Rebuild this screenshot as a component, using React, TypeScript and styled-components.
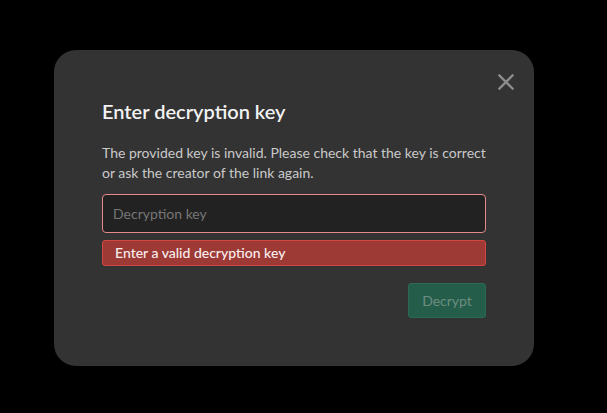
import styled, { createGlobalStyle } from "styled-components";

const GlobalStyle = createGlobalStyle`
    html, body {
        margin: 0;
        background: #000;
        font-family: Lato, "Noto Sans", sans-serif;
    }
`;

const CloseIcon = () => (
    <svg width="16" height="16" viewBox="0 0 16 16">
        <path d="M1.5 1.5 L14.5 14.5 M14.5 1.5 L1.5 14.5" stroke="#8c8c8c" strokeWidth="2.4" strokeLinecap="square" />
    </svg>
);

export default function App() {
    return (
        <>
            <GlobalStyle />
            <Backdrop>
                <Dialog>
                    <CloseButton aria-label="Close">
                        <CloseIcon />
                    </CloseButton>

                    <Title>Enter decryption key</Title>
                    <Description>
                        The provided key is invalid. Please check that the key is correct
                        or ask the creator of the link again.
                    </Description>

                    <KeyInput placeholder="Decryption key" />
                    <ErrorMessage>Enter a valid decryption key</ErrorMessage>

                    <Actions>
                        <DecryptButton disabled>Decrypt</DecryptButton>
                    </Actions>
                </Dialog>
            </Backdrop>
        </>
    );
}

const Backdrop = styled.div`
    width: 607px;
    height: 413px;
    box-sizing: border-box;
    padding: 50px 0 0 54px;
    background: #000;
`;

const Dialog = styled.div`
    position: relative;
    width: 480px;
    height: 316px;
    box-sizing: border-box;
    padding: 49px 48px 48px;
    background: #333333;
    border-radius: 22px;
    display: flex;
    flex-direction: column;
`;

const CloseButton = styled.button`
    position: absolute;
    top: 24px;
    right: 20px;
    width: 16px;
    height: 16px;
    padding: 0;
    border: none;
    background: none;
    display: flex;
    cursor: pointer;
`;

const Title = styled.h2`
    margin: 0;
    font-size: 20px;
    line-height: 24px;
    font-weight: 600;
    color: #f2f2f2;
`;

const Description = styled.p`
    margin: 20px 0 0;
    font-size: 14px;
    line-height: 20px;
    color: #c9c9c9;
`;

const KeyInput = styled.input`
    margin-top: 11px;
    height: 39px;
    box-sizing: border-box;
    padding: 0 10px;
    background: #222222;
    border: 1px solid #e58a8a;
    border-radius: 4px;
    font-family: inherit;
    font-size: 14px;
    color: #ddd;
    outline: none;

    &::placeholder {
        color: #767676;
    }
`;

const ErrorMessage = styled.div`
    margin-top: 7px;
    height: 26px;
    box-sizing: border-box;
    padding: 0 12px 2px;
    display: flex;
    align-items: center;
    background: #9e3a36;
    border: 1px solid #d4463f;
    border-radius: 3px;
    font-size: 14px;
    font-weight: 500;
    color: #f8eeee;
`;

const Actions = styled.div`
    margin-top: 17px;
    display: flex;
    justify-content: flex-end;
`;

const DecryptButton = styled.button`
    width: 78px;
    height: 35px;
    border: 1px solid #2a6a55;
    border-radius: 3px;
    background: #245e4b;
    font-family: inherit;
    font-size: 14px;
    color: #6c8d7f;
`;
